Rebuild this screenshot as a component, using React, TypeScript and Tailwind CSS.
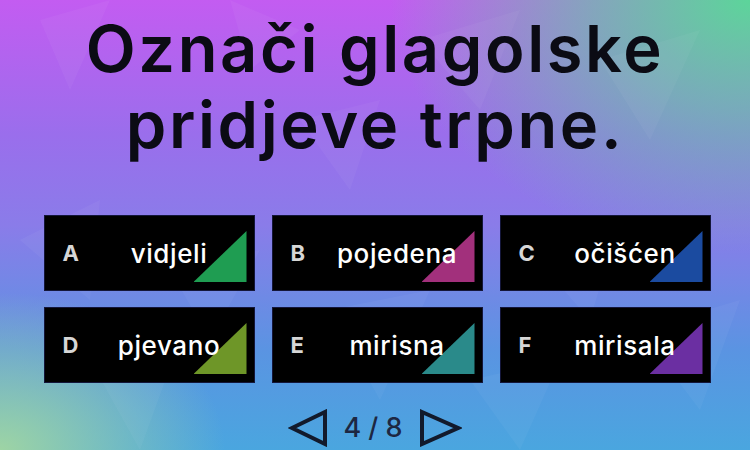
import { useState } from "react";

type Answer = { key: string; text: string; color: string };

const answers: Answer[] = [
  { key: "A", text: "vidjeli", color: "#1f9d52" },
  { key: "B", text: "pojedena", color: "#a2307c" },
  { key: "C", text: "očišćen", color: "#1b4ba0" },
  { key: "D", text: "pjevano", color: "#6e9628" },
  { key: "E", text: "mirisna", color: "#2a8a8a" },
  { key: "F", text: "mirisala", color: "#6b2fa2" },
];

// faint triangle texture in the background
const shards = [
  "40,20 110,0 70,90",
  "230,0 300,30 250,70",
  "420,40 520,10 480,110",
  "600,60 700,30 650,140",
  "20,240 100,200 90,300",
  "170,270 260,250 210,340",
  "330,310 430,290 380,400",
  "520,240 620,220 590,320",
  "640,330 740,300 700,410",
  "90,360 180,340 140,450",
  "470,380 560,360 520,450",
  "300,120 380,100 350,190",
];

function AnswerCard({ a }: { a: Answer }) {
  return (
    <button className="relative flex h-[76px] w-[211px] items-center bg-black border border-[#14163a] text-left">
      <span
        className="absolute right-[7px] bottom-[8px] h-[51px] w-[53px]"
        style={{ background: a.color, clipPath: "polygon(100% 0, 100% 100%, 0 100%)" }}
      />
      <span className="relative w-[40px] pl-[18px] text-[22px] font-bold text-[#d6d6d6] tracking-[0.5px]">{a.key}</span>
      <span className="relative flex-1 text-center text-[26px] font-medium text-white tracking-[0.6px]">
        {a.text}
      </span>
    </button>
  );
}

export default function App() {
  const [page] = useState(4);

  return (
    <div
      className="relative h-[450px] w-[750px] overflow-hidden bg-[radial-gradient(ellipse_60%_70%_at_100%_0%,#5cd59a_0%,rgba(92,213,154,0.6)_35%,transparent_80%),radial-gradient(ellipse_30%_35%_at_0%_100%,#9ed4a4_0%,rgba(158,212,164,0.5)_50%,transparent_100%),linear-gradient(180deg,#c35cf1_0%,#9a6eec_30%,#8a7ce9_50%,#5a94e2_78%,#4aa6df_100%)]"
      style={{ fontFamily: "Inter, 'Noto Sans', sans-serif" }}
    >
      <svg className="pointer-events-none absolute inset-0" width="750" height="450">
        {shards.map((p, i) => (
          <polygon key={i} points={p} fill="white" opacity={0.04} />
        ))}
      </svg>

      <div className="relative flex flex-col items-center">
        <h1 className="mt-[11px] text-center text-[65px] font-semibold leading-[76px] text-[#0b0b14] tracking-[2.6px]">
          Označi glagolske
          <br />
          pridjeve trpne.
        </h1>

        <div className="mt-[52px] grid grid-cols-[211px_211px_211px] gap-x-[17px] gap-y-[16px] pl-[4px]">
          {answers.map((a) => (
            <AnswerCard key={a.key} a={a} />
          ))}
        </div>

        <div className="mt-[25px] flex items-center gap-[15px]">
          <svg width="40" height="38" viewBox="0 0 40 38">
            <polygon points="4,19 37,3 37,35" fill="none" stroke="#121a2c" strokeWidth="4" strokeLinejoin="miter" />
          </svg>
          <span className="text-[27px] font-medium text-[#1d2742]">{page} / 8</span>
          <svg width="44" height="38" viewBox="0 0 44 38">
            <polygon points="4,3 40,19 4,35" fill="none" stroke="#121a2c" strokeWidth="4" strokeLinejoin="miter" />
          </svg>
        </div>
      </div>
    </div>
  );
}
